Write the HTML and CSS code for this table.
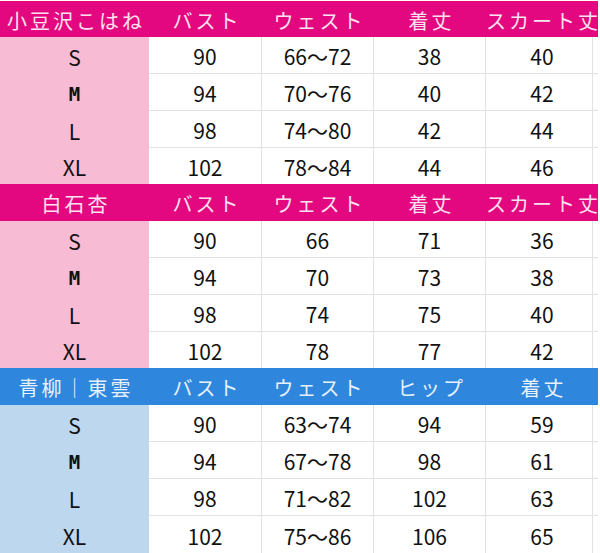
FILE: index.html
```html
<!DOCTYPE html>
<html lang="ja">
<head>
<meta charset="utf-8">
<title>サイズ表</title>
<link rel="stylesheet" href="styles.css">
</head>
<body>
<div class="sheet">
  <section class="block pink first">
    <div class="hd">小豆沢こはね</div>
    <div class="hd">バスト</div>
    <div class="hd">ウェスト</div>
    <div class="hd">着丈</div>
    <div class="hd">スカート丈</div>

    <div class="sz">S</div><div class="v">90</div><div class="v">66～72</div><div class="v">38</div><div class="v end">40</div>
    <div class="sz m">M</div><div class="v">94</div><div class="v">70～76</div><div class="v">40</div><div class="v end">42</div>
    <div class="sz">L</div><div class="v">98</div><div class="v">74～80</div><div class="v">42</div><div class="v end">44</div>
    <div class="sz">XL</div><div class="v">102</div><div class="v">78～84</div><div class="v">44</div><div class="v end">46</div>
  </section>

  <section class="block pink">
    <div class="hd">白石杏</div>
    <div class="hd">バスト</div>
    <div class="hd">ウェスト</div>
    <div class="hd">着丈</div>
    <div class="hd">スカート丈</div>

    <div class="sz">S</div><div class="v">90</div><div class="v">66</div><div class="v">71</div><div class="v end">36</div>
    <div class="sz m">M</div><div class="v">94</div><div class="v">70</div><div class="v">73</div><div class="v end">38</div>
    <div class="sz">L</div><div class="v">98</div><div class="v">74</div><div class="v">75</div><div class="v end">40</div>
    <div class="sz">XL</div><div class="v">102</div><div class="v">78</div><div class="v">77</div><div class="v end">42</div>
  </section>

  <section class="block blue last">
    <div class="hd">青柳｜東雲</div>
    <div class="hd">バスト</div>
    <div class="hd">ウェスト</div>
    <div class="hd">ヒップ</div>
    <div class="hd">着丈</div>

    <div class="sz">S</div><div class="v">90</div><div class="v">63～74</div><div class="v">94</div><div class="v end">59</div>
    <div class="sz m">M</div><div class="v">94</div><div class="v">67～78</div><div class="v">98</div><div class="v end">61</div>
    <div class="sz">L</div><div class="v">98</div><div class="v">71～82</div><div class="v">102</div><div class="v end">63</div>
    <div class="sz">XL</div><div class="v">102</div><div class="v">75～86</div><div class="v">106</div><div class="v end">65</div>
  </section>
</div>
</body>
</html>
```

FILE: styles.css
```css
html, body {
  margin: 0;
  padding: 0;
  background: #ffffff;
}

.sheet {
  width: 600px;
  height: 553px;
  overflow: hidden;
  font-family: "Noto Sans CJK JP", "Noto Sans", sans-serif;
}

.block {
  display: grid;
  width: 598px;
  grid-template-columns: 149px 113px 112px 112px 112px;
  grid-template-rows: 37px 37px 37px 37px 36px;
}

.block.first {
  margin-top: 1px;
  grid-template-rows: 36px 37px 37px 37px 36px;
}

.block.last {
  grid-template-rows: repeat(5, 37px);
}

.hd {
  display: flex;
  align-items: center;
  justify-content: center;
  box-sizing: border-box;
  padding: 3px 0 0 3px;
  font-size: 20px;
  letter-spacing: 3px;
  white-space: nowrap;
  line-height: 1;
}

.pink .hd {
  background: #e3087f;
  color: #fbe2f0;
}

.blue .hd {
  background: #2e86dd;
  color: #e8f1fb;
}

.sz,
.v {
  display: flex;
  align-items: center;
  justify-content: center;
  box-sizing: border-box;
  padding-top: 3px;
  font-size: 21px;
  line-height: 1;
  color: #111111;
}

.pink .sz {
  background: #f7bcd3;
}

.blue .sz {
  background: #bdd7ee;
}

.sz.m {
  font-family: "DejaVu Sans Mono", monospace;
  font-weight: bold;
  font-size: 19px;
}

.v {
  background: #ffffff;
  border-right: 1px solid #e2e2e2;
  border-bottom: 1px solid #e2e2e2;
}

.v.end {
  border-right: none;
  padding-right: 0;
  background: linear-gradient(to right, transparent 106px, #e2e2e2 106px, #e2e2e2 107px, transparent 107px);
}

.block > .v:nth-last-child(-n+4) {
  border-bottom: none;
}
```
